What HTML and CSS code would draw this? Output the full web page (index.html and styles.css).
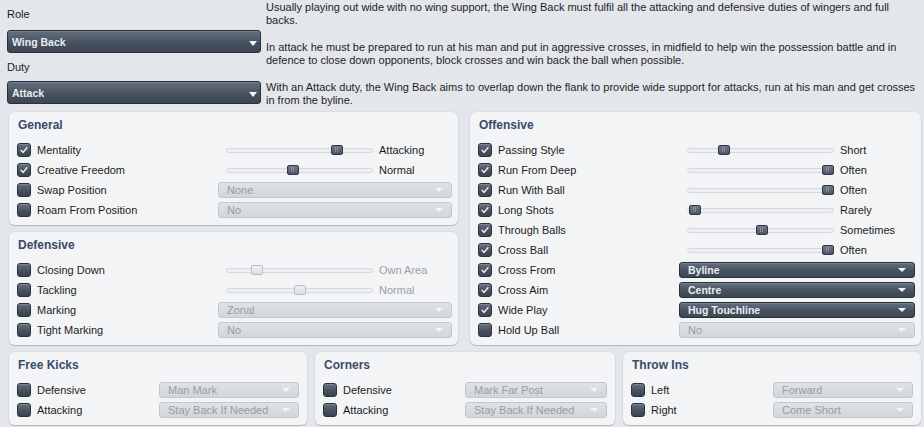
FILE: index.html
```html
<!DOCTYPE html>
<html>
<head>
<meta charset="utf-8">
<link rel="stylesheet" href="styles.css">
</head>
<body>
<div class="page">
  <div class="top">
    <div class="selectors">
      <div class="field-label">Role</div>
      <div class="select dark big"><span>Wing Back</span><i class="arrow"></i></div>
      <div class="field-label duty">Duty</div>
      <div class="select dark big"><span>Attack</span><i class="arrow"></i></div>
    </div>
    <div class="desc">
      <p>Usually playing out wide with no wing support, the Wing Back must fulfil all the attacking and defensive duties of wingers and full backs.</p>
      <p>In attack he must be prepared to run at his man and put in aggressive crosses, in midfield to help win the possession battle and in defence to close down opponents, block crosses and win back the ball when possible.</p>
      <p>With an Attack duty, the Wing Back aims to overlap down the flank to provide wide support for attacks, run at his man and get crosses in from the byline.</p>
    </div>
  </div>

  <div class="main">
    <div class="col-left">
      <section class="panel">
        <h2 class="panel-title">General</h2>
        <div class="row">
          <label class="opt"><span class="cb on"><svg viewBox="0 0 14 14"><path d="M3.6 7.4 L6 9.8 L10.4 4.4"/></svg></span>Mentality</label>
          <div class="slider"><div class="track"><span class="thumb" style="left:104px"></span></div><span class="val">Attacking</span></div>
        </div>
        <div class="row">
          <label class="opt"><span class="cb on"><svg viewBox="0 0 14 14"><path d="M3.6 7.4 L6 9.8 L10.4 4.4"/></svg></span>Creative Freedom</label>
          <div class="slider"><div class="track"><span class="thumb" style="left:60px"></span></div><span class="val">Normal</span></div>
        </div>
        <div class="row">
          <label class="opt"><span class="cb"></span>Swap Position</label>
          <div class="select off"><span>None</span><i class="arrow"></i></div>
        </div>
        <div class="row">
          <label class="opt"><span class="cb"></span>Roam From Position</label>
          <div class="select off"><span>No</span><i class="arrow"></i></div>
        </div>
      </section>

      <section class="panel grow">
        <h2 class="panel-title">Defensive</h2>
        <div class="row">
          <label class="opt"><span class="cb"></span>Closing Down</label>
          <div class="slider disabled"><div class="track"><span class="thumb" style="left:24px"></span></div><span class="val">Own Area</span></div>
        </div>
        <div class="row">
          <label class="opt"><span class="cb"></span>Tackling</label>
          <div class="slider disabled"><div class="track"><span class="thumb" style="left:67px"></span></div><span class="val">Normal</span></div>
        </div>
        <div class="row">
          <label class="opt"><span class="cb"></span>Marking</label>
          <div class="select off"><span>Zonal</span><i class="arrow"></i></div>
        </div>
        <div class="row">
          <label class="opt"><span class="cb"></span>Tight Marking</label>
          <div class="select off"><span>No</span><i class="arrow"></i></div>
        </div>
      </section>
    </div>

    <section class="panel">
      <h2 class="panel-title">Offensive</h2>
      <div class="row">
        <label class="opt"><span class="cb on"><svg viewBox="0 0 14 14"><path d="M3.6 7.4 L6 9.8 L10.4 4.4"/></svg></span>Passing Style</label>
        <div class="slider"><div class="track"><span class="thumb" style="left:30px"></span></div><span class="val">Short</span></div>
      </div>
      <div class="row">
        <label class="opt"><span class="cb on"><svg viewBox="0 0 14 14"><path d="M3.6 7.4 L6 9.8 L10.4 4.4"/></svg></span>Run From Deep</label>
        <div class="slider"><div class="track"><span class="thumb" style="left:134px"></span></div><span class="val">Often</span></div>
      </div>
      <div class="row">
        <label class="opt"><span class="cb on"><svg viewBox="0 0 14 14"><path d="M3.6 7.4 L6 9.8 L10.4 4.4"/></svg></span>Run With Ball</label>
        <div class="slider"><div class="track"><span class="thumb" style="left:134px"></span></div><span class="val">Often</span></div>
      </div>
      <div class="row">
        <label class="opt"><span class="cb on"><svg viewBox="0 0 14 14"><path d="M3.6 7.4 L6 9.8 L10.4 4.4"/></svg></span>Long Shots</label>
        <div class="slider"><div class="track"><span class="thumb" style="left:1px"></span></div><span class="val">Rarely</span></div>
      </div>
      <div class="row">
        <label class="opt"><span class="cb on"><svg viewBox="0 0 14 14"><path d="M3.6 7.4 L6 9.8 L10.4 4.4"/></svg></span>Through Balls</label>
        <div class="slider"><div class="track"><span class="thumb" style="left:68px"></span></div><span class="val">Sometimes</span></div>
      </div>
      <div class="row">
        <label class="opt"><span class="cb on"><svg viewBox="0 0 14 14"><path d="M3.6 7.4 L6 9.8 L10.4 4.4"/></svg></span>Cross Ball</label>
        <div class="slider"><div class="track"><span class="thumb" style="left:134px"></span></div><span class="val">Often</span></div>
      </div>
      <div class="row">
        <label class="opt"><span class="cb on"><svg viewBox="0 0 14 14"><path d="M3.6 7.4 L6 9.8 L10.4 4.4"/></svg></span>Cross From</label>
        <div class="select dark"><span>Byline</span><i class="arrow"></i></div>
      </div>
      <div class="row">
        <label class="opt"><span class="cb on"><svg viewBox="0 0 14 14"><path d="M3.6 7.4 L6 9.8 L10.4 4.4"/></svg></span>Cross Aim</label>
        <div class="select dark"><span>Centre</span><i class="arrow"></i></div>
      </div>
      <div class="row">
        <label class="opt"><span class="cb on"><svg viewBox="0 0 14 14"><path d="M3.6 7.4 L6 9.8 L10.4 4.4"/></svg></span>Wide Play</label>
        <div class="select dark"><span>Hug Touchline</span><i class="arrow"></i></div>
      </div>
      <div class="row">
        <label class="opt"><span class="cb"></span>Hold Up Ball</label>
        <div class="select off"><span>No</span><i class="arrow"></i></div>
      </div>
    </section>
  </div>

  <div class="bottom">
    <section class="panel small">
      <h2 class="panel-title">Free Kicks</h2>
      <div class="row">
        <label class="opt"><span class="cb"></span>Defensive</label>
        <div class="select off"><span>Man Mark</span><i class="arrow"></i></div>
      </div>
      <div class="row">
        <label class="opt"><span class="cb"></span>Attacking</label>
        <div class="select off"><span>Stay Back If Needed</span><i class="arrow"></i></div>
      </div>
    </section>
    <section class="panel small">
      <h2 class="panel-title">Corners</h2>
      <div class="row">
        <label class="opt"><span class="cb"></span>Defensive</label>
        <div class="select off"><span>Mark Far Post</span><i class="arrow"></i></div>
      </div>
      <div class="row">
        <label class="opt"><span class="cb"></span>Attacking</label>
        <div class="select off"><span>Stay Back If Needed</span><i class="arrow"></i></div>
      </div>
    </section>
    <section class="panel small">
      <h2 class="panel-title">Throw Ins</h2>
      <div class="row">
        <label class="opt"><span class="cb"></span>Left</label>
        <div class="select off"><span>Forward</span><i class="arrow"></i></div>
      </div>
      <div class="row">
        <label class="opt"><span class="cb"></span>Right</label>
        <div class="select off"><span>Come Short</span><i class="arrow"></i></div>
      </div>
    </section>
  </div>
</div>
</body>
</html>
```

FILE: styles.css
```css
* { box-sizing: border-box; }

html, body {
  margin: 0;
  padding: 0;
  background: #e3e7eb;
}

body {
  font-family: "Liberation Sans", Arial, Helvetica, sans-serif;
  font-size: 11px;
  color: #1c1c1c;
  width: 924px;
  height: 427px;
  overflow: hidden;
}

.page {
  display: flex;
  flex-direction: column;
}

/* ---------- top ---------- */
.top {
  display: grid;
  grid-template-columns: 254px 655px;
  column-gap: 5px;
  padding-left: 7px;
  height: 106px;
}

.selectors {
  display: flex;
  flex-direction: column;
  padding-top: 7px;
}

.field-label {
  line-height: 14px;
  height: 14px;
  margin-bottom: 9px;
  color: #1c1c1c;
}

.field-label.duty {
  margin-top: 7px;
  margin-bottom: 7px;
}

.desc {
  padding-top: 1px;
  line-height: 12.5px;
  color: #1e1e1e;
}

.desc p {
  margin: 0 0 15px 0;
}

/* ---------- selects ---------- */
.select {
  position: relative;
  height: 16px;
  border-radius: 3px;
  display: flex;
  align-items: center;
  padding-left: 8px;
  white-space: nowrap;
}

.select.big {
  height: 23px;
  padding-left: 4px;
}

.select.dark {
  background: linear-gradient(#637081, #48525f 55%, #3d4652);
  border: 1px solid #2a3038;
  color: #e9edf1;
  font-weight: bold;
  font-size: 10.5px;
  box-shadow: inset 0 1px 0 rgba(255, 255, 255, 0.12);
}

.select.off {
  background: linear-gradient(#dfe2e6, #d2d6db);
  border: 1px solid #c3c8ce;
  color: #979da5;
}

.arrow {
  position: absolute;
  right: 8px;
  top: 50%;
  margin-top: -2px;
  width: 0;
  height: 0;
  border-left: 4px solid transparent;
  border-right: 4px solid transparent;
  border-top: 4px solid #f4f6f8;
}

.select.big .arrow {
  right: 3px;
  margin-top: -1px;
  border-left-width: 4.5px;
  border-right-width: 4.5px;
  border-top-width: 5px;
}

.select.off .arrow {
  border-top-color: #f3f5f7;
}

/* ---------- main ---------- */
.main {
  display: grid;
  grid-template-columns: 449px 451px;
  column-gap: 12px;
  padding-left: 9px;
  margin-top: 6px;
}

.col-left {
  display: flex;
  flex-direction: column;
  gap: 7px;
}

.grow { flex: 1; }

.panel {
  background: #f2f4f6;
  border-radius: 6px;
  padding: 6px 6px 5px 8px;
  box-shadow: 0 1px 1px rgba(0, 0, 0, 0.18), 0 0 0 1px rgba(0, 0, 0, 0.03);
}

.panel-title {
  margin: 0 0 8px 1px;
  font-size: 12px;
  line-height: 14px;
  font-weight: bold;
  color: #3b4a68;
}

.row {
  display: grid;
  grid-template-columns: 201px 1fr;
  align-items: center;
  height: 20px;
}

.panel.small .row {
  grid-template-columns: 142px 1fr;
}

.panel.small {
  padding-right: 8px;
}

.opt {
  display: flex;
  align-items: center;
  gap: 6px;
  white-space: nowrap;
}

.cb {
  width: 14px;
  height: 14px;
  border-radius: 3px;
  background: linear-gradient(#66717f, #46505c 60%, #3b444f);
  border: 1px solid #2b3139;
  box-shadow: inset 0 1px 0 rgba(255, 255, 255, 0.15);
  display: flex;
  align-items: center;
  justify-content: center;
  flex: none;
}

.cb svg {
  width: 12px;
  height: 12px;
}

.cb svg path {
  fill: none;
  stroke: #eef0f2;
  stroke-width: 1.7;
  stroke-linecap: round;
  stroke-linejoin: round;
}

/* ---------- sliders ---------- */
.slider {
  display: flex;
  align-items: center;
}

.track {
  position: relative;
  width: 147px;
  height: 5px;
  margin-left: 8px;
  border-radius: 3px;
  background: #eceef1;
  border: 1px solid #d5d9dd;
}

.thumb {
  position: absolute;
  top: -4px;
  width: 12px;
  height: 10px;
  border-radius: 2px;
  background:
    linear-gradient(90deg, transparent 4px, rgba(255,255,255,0.25) 4px, rgba(255,255,255,0.25) 5px, transparent 5px, transparent 6px, rgba(255,255,255,0.25) 6px, rgba(255,255,255,0.25) 7px, transparent 7px) center / 12px 5px no-repeat,
    linear-gradient(#6e7989, #4c5663);
  border: 1px solid #313842;
}

.slider.disabled .thumb {
  background: linear-gradient(#eef0f2, #dcdfe3);
  border: 1px solid #b9bec5;
}

.val {
  margin-left: 6px;
  color: #1c1c1c;
}

.slider.disabled .val {
  color: #9aa0a7;
}

/* ---------- bottom ---------- */
.bottom {
  display: grid;
  grid-template-columns: 298px 300px 298px;
  column-gap: 8px;
  padding-left: 9px;
  margin-top: 7px;
}
```
